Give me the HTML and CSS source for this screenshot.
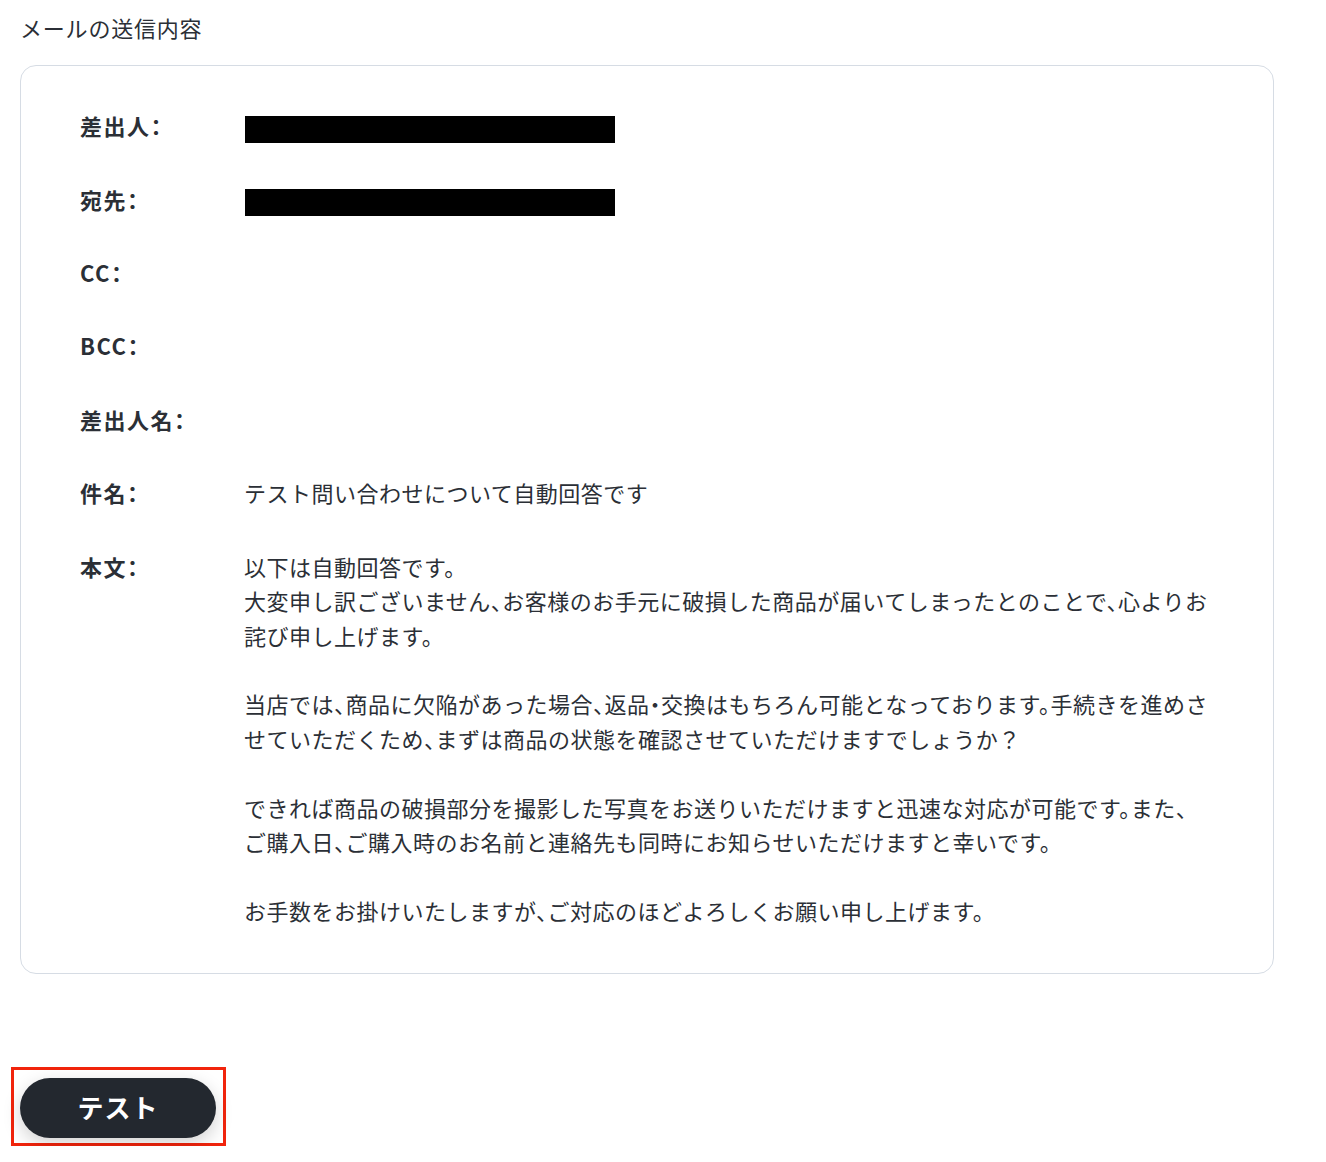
FILE: index.html
```html
<!DOCTYPE html>
<html lang="ja">
<head>
  <meta charset="UTF-8" />
  <title>メールの送信内容</title>
  <link rel="stylesheet" href="styles.css">
</head>
<body>
  <h2 class="section-title">メールの送信内容</h2>

  <div class="mail-box">
    <div class="mail-row">
      <div class="mail-label">差出人：</div>
      <div class="mail-value"><span class="redact"></span></div>
    </div>
    <div class="mail-row">
      <div class="mail-label">宛先：</div>
      <div class="mail-value"><span class="redact"></span></div>
    </div>
    <div class="mail-row">
      <div class="mail-label">CC：</div>
      <div class="mail-value"></div>
    </div>
    <div class="mail-row">
      <div class="mail-label">BCC：</div>
      <div class="mail-value"></div>
    </div>
    <div class="mail-row">
      <div class="mail-label">差出人名：</div>
      <div class="mail-value"></div>
    </div>
    <div class="mail-row">
      <div class="mail-label">件名：</div>
      <div class="mail-value">テスト問い合わせについて自動回答です</div>
    </div>
    <div class="mail-row">
      <div class="mail-label">本文：</div>
      <div class="mail-value body-text">以下は自動回答です。
大変申し訳ございません、お客様のお手元に破損した商品が届いてしまったとのことで、心よりお詫び申し上げます。

当店では、商品に欠陥があった場合、返品・交換はもちろん可能となっております。手続きを進めさせていただくため、まずは商品の状態を確認させていただけますでしょうか？

できれば商品の破損部分を撮影した写真をお送りいただけますと迅速な対応が可能です。また、<span class="nowrap">ご購入日</span>、ご購入時のお名前と連絡先も同時にお知らせいただけますと幸いです。

お手数をお掛けいたしますが、ご対応のほどよろしくお願い申し上げます。</div>
    </div>
  </div>

  <div class="actions">
    <div class="highlight">
      <button class="btn-test">テスト</button>
    </div>
  </div>
</body>
</html>
```

FILE: styles.css
```css
body {
  margin: 0;
  padding: 0 52px 0 20px;
  background: #fff;
  color: #2b2f36;
  font-family: "Noto Sans CJK JP", "Noto Sans", sans-serif;
  font-feature-settings: "halt";
}
.section-title {
  margin: 0;
  padding-top: 10px;
  font-size: 22px;
  font-weight: 400;
  line-height: 34px;
  letter-spacing: 0.8px;
}
.mail-box {
  margin-top: 21px;
  border: 1px solid #d6dce4;
  border-radius: 16px;
  padding: 42px 62px 46px 59px;
  display: flex;
  flex-direction: column;
  gap: 39px;
}
.mail-row {
  display: flex;
  font-size: 22px;
  line-height: 34.4px;
  letter-spacing: 0.5px;
}
.mail-label {
  width: 164px;
  flex-shrink: 0;
  font-weight: 700;
  letter-spacing: 1.5px;
}
.mail-value {
  flex: 1;
  min-height: 34.4px;
}
.body-text {
  white-space: pre-wrap;
}
.nowrap {
  white-space: nowrap;
}
.redact {
  display: inline-block;
  width: 370px;
  height: 27px;
  background: #000;
  vertical-align: middle;
  margin-left: 1px;
}
.actions {
  margin-top: 93px;
}
.highlight {
  display: inline-block;
  margin-left: -9px;
  padding: 8px 7px 5px 6px;
  border: 3px solid #f1240c;
}
.btn-test {
  display: block;
  width: 196px;
  height: 60px;
  border: none;
  border-radius: 30px;
  background: #23282f;
  color: #fff;
  font-family: "Noto Sans CJK JP", sans-serif;
  font-size: 26px;
  font-weight: 700;
  letter-spacing: 1px;
  padding-bottom: 5px;
  box-shadow: 0 6px 18px rgba(0, 0, 0, 0.18);
}
```
